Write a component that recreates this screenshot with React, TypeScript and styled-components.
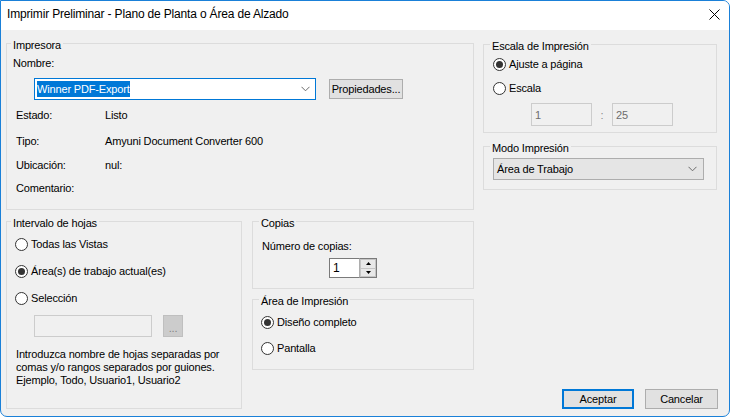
import React from 'react';
import styled, { createGlobalStyle } from 'styled-components';

const GlobalStyle = createGlobalStyle`
    html, body {
        margin: 0;
        padding: 0;
        background: #ffffff;
    }
    body {
        font-family: "Liberation Sans", Arial, sans-serif;
        font-size: 11px;
        letter-spacing: -0.16px;
        color: #000000;
    }
`;

const Window = styled.div`
    width: 730px;
    height: 417px;
    box-sizing: border-box;
    border: 1px solid #1a80d8;
    border-radius: 0 7px 7px 7px;
    background: #f0f0f0;
    display: flex;
    flex-direction: column;
    overflow: hidden;
`;

const TitleBar = styled.div`
    flex: none;
    height: 29px;
    background: #ffffff;
    display: flex;
    align-items: center;
    justify-content: space-between;
    padding-left: 6px;
`;

const Title = styled.span`
    font-size: 12px;
    letter-spacing: -0.17px;
    padding-bottom: 3px;
`;

const CloseButton = styled.div`
    width: 30px;
    height: 29px;
    display: flex;
    align-items: center;
    justify-content: center;
    padding-bottom: 3px;
    box-sizing: border-box;
`;

const Body = styled.div`
    flex: 1;
    display: flex;
    gap: 9px;
    padding: 13px 11px 7px 5px;
`;

const LeftColumn = styled.div`
    width: 468px;
    display: flex;
    flex-direction: column;
`;

const RightColumn = styled.div`
    width: 235px;
    display: flex;
    flex-direction: column;
    padding-top: 1px;
`;

const BottomRow = styled.div`
    display: flex;
    gap: 10px;
    margin-top: 11px;
`;

const Stack = styled.div`
    width: 222px;
    display: flex;
    flex-direction: column;
    gap: 10px;
`;

const Group = styled.div<{ $h: number; $w?: number; $pad?: string; $top?: number }>`
    position: relative;
    box-sizing: border-box;
    border: 1px solid #dcdcdc;
    height: ${(p) => p.$h}px;
    width: ${(p) => (p.$w ? `${p.$w}px` : 'auto')};
    padding: ${(p) => p.$pad || '0'};
    margin-top: ${(p) => p.$top || 0}px;
`;

const Caption = styled.span<{ $inset: number }>`
    position: absolute;
    top: -5px;
    left: ${(p) => p.$inset}px;
    padding: 0 2px;
    line-height: 13px;
    background: #f0f0f0;
`;

const Label = styled.div`
    line-height: 13px;
`;

const PrinterRow = styled.div`
    display: flex;
    align-items: center;
    gap: 13px;
    margin: 8px 0 0 21px;
`;

const Combo = styled.div`
    width: 282px;
    height: 22px;
    box-sizing: border-box;
    border: 1px solid #0078d7;
    background: #ffffff;
    display: flex;
    align-items: center;
    justify-content: space-between;
    padding: 0 5px 0 2px;
`;

const Selected = styled.span`
    background: #0078d7;
    color: #ffffff;
    line-height: 16px;
`;

const Button = styled.button<{ $w: number; $h?: number; $primary?: boolean }>`
    width: ${(p) => p.$w}px;
    height: ${(p) => p.$h || 20}px;
    box-sizing: border-box;
    font: inherit;
    letter-spacing: inherit;
    color: #000000;
    background: #e1e1e1;
    border: ${(p) => (p.$primary ? '2px solid #0078d7' : '1px solid #adadad')};
    padding: 0;
    display: flex;
    align-items: center;
    justify-content: center;
`;

const InfoGrid = styled.div`
    display: grid;
    grid-template-columns: 89px 1fr;
    grid-template-rows: 26px 26px 22px 24px;
    align-items: center;
    margin: 2px 0 0 3px;
`;

const RadioList = styled.div<{ $gap?: number }>`
    display: flex;
    flex-direction: column;
    gap: ${(p) => p.$gap || 0}px;
`;

const RadioRow = styled.label<{ $h: number }>`
    display: flex;
    align-items: center;
    gap: 3px;
    height: ${(p) => p.$h}px;
`;

const RadioCircle = styled.span<{ $checked?: boolean }>`
    width: 13px;
    height: 13px;
    box-sizing: border-box;
    border: 1px solid #333333;
    border-radius: 50%;
    background: #ffffff;
    display: inline-flex;
    align-items: center;
    justify-content: center;

    &::after {
        content: '';
        width: 7px;
        height: 7px;
        border-radius: 50%;
        background: #333333;
        display: ${(p) => (p.$checked ? 'block' : 'none')};
    }
`;

const ScaleRow = styled.div`
    display: flex;
    align-items: center;
    margin: 3px 0 0 38px;
`;

const DisabledBox = styled.div<{ $w: number; $h: number }>`
    width: ${(p) => p.$w}px;
    height: ${(p) => p.$h}px;
    box-sizing: border-box;
    border: 1px solid #cccccc;
    background: #f0f0f0;
    color: #6d6d6d;
    display: flex;
    align-items: center;
    padding-left: 3px;
`;

const Colon = styled.span`
    width: 20px;
    text-align: center;
    color: #8a8a8a;
`;

const Select = styled.div`
    width: 211px;
    height: 22px;
    box-sizing: border-box;
    border: 1px solid #adadad;
    background: #e5e5e5;
    display: flex;
    align-items: center;
    justify-content: space-between;
    padding: 0 6px 0 3px;
`;

const SheetsRow = styled.div`
    display: flex;
    gap: 11px;
    margin: 4px 0 0 19px;
`;

const EllipsisButton = styled.div`
    width: 20px;
    height: 22px;
    box-sizing: border-box;
    border: 1px solid #bfbfbf;
    background: #cccccc;
    color: #838383;
    display: flex;
    align-items: flex-end;
    justify-content: center;
    padding-bottom: 4px;
    line-height: 8px;
`;

const Help = styled.p`
    margin: 11px 0 0 1px;
    line-height: 13px;
`;

const Spin = styled.div`
    display: flex;
    margin: 5px 0 0 67px;
`;

const SpinInput = styled.div`
    width: 30px;
    height: 20px;
    box-sizing: border-box;
    border: 1px solid #7a7a7a;
    border-right: none;
    background: #ffffff;
    display: flex;
    align-items: center;
    padding-left: 3px;
    font-size: 12px;
`;

const SpinButtons = styled.div`
    width: 18px;
    height: 20px;
    box-sizing: border-box;
    border: 1px solid #7a7a7a;
    border-left: 1px solid #adadad;
    background: #e8e8e8;
    display: flex;
    flex-direction: column;
`;

const SpinHalf = styled.div<{ $top?: boolean }>`
    flex: 1;
    display: flex;
    align-items: center;
    justify-content: center;
    border: 1px solid #c5c5c5;
    border-top: ${(p) => (p.$top ? '1px solid #c5c5c5' : 'none')};
`;

const Actions = styled.div`
    margin-top: auto;
    display: flex;
    justify-content: flex-end;
    gap: 11px;
`;

const Chevron = () => (
    <svg width="9" height="6" viewBox="0 0 9 6">
        <polyline points="0.5,0.8 4.5,4.8 8.5,0.8" fill="none" stroke="#6b6b6b" strokeWidth="1" />
    </svg>
);

const Radio = ({ label, checked, h }: { label: string; checked?: boolean; h: number }) => (
    <RadioRow $h={h}>
        <RadioCircle $checked={checked} />
        <span>{label}</span>
    </RadioRow>
);

const App = () => {
    return (
        <>
            <GlobalStyle />
            <Window>
                <TitleBar>
                    <Title>Imprimir Preliminar - Plano de Planta o Área de Alzado</Title>
                    <CloseButton>
                        <svg width="11" height="11" viewBox="0 0 11 11">
                            <path d="M0.5 0.5 L10.5 10.5 M10.5 0.5 L0.5 10.5" stroke="#000" strokeWidth="1" />
                        </svg>
                    </CloseButton>
                </TitleBar>
                <Body>
                    <LeftColumn>
                        <Group $h={167} $pad="13px 0 0 6px">
                            <Caption $inset={4}>Impresora</Caption>
                            <Label>Nombre:</Label>
                            <PrinterRow>
                                <Combo>
                                    <Selected>Winner PDF-Export</Selected>
                                    <Chevron />
                                </Combo>
                                <Button $w={74}>Propiedades...</Button>
                            </PrinterRow>
                            <InfoGrid>
                                <span>Estado:</span>
                                <span>Listo</span>
                                <span>Tipo:</span>
                                <span>Amyuni Document Converter 600</span>
                                <span>Ubicación:</span>
                                <span>nul:</span>
                                <span>Comentario:</span>
                                <span />
                            </InfoGrid>
                        </Group>
                        <BottomRow>
                            <Group $h={188} $w={236} $pad="9px 0 0 8px">
                                <Caption $inset={4}>Intervalo de hojas</Caption>
                                <RadioList $gap={1}>
                                    <Radio h={26} label="Todas las Vistas" />
                                    <Radio h={26} label="Área(s) de trabajo actual(es)" checked />
                                    <Radio h={26} label="Selección" />
                                </RadioList>
                                <SheetsRow>
                                    <DisabledBox $w={118} $h={22} />
                                    <EllipsisButton>...</EllipsisButton>
                                </SheetsRow>
                                <Help>
                                    Introduzca nombre de hojas separadas por
                                    <br />
                                    comas y/o rangos separados por guiones.
                                    <br />
                                    Ejemplo, Todo, Usuario1, Usuario2
                                </Help>
                            </Group>
                            <Stack>
                                <Group $h={68} $pad="18px 0 0 9px">
                                    <Caption $inset={6}>Copias</Caption>
                                    <Label>Número de copias:</Label>
                                    <Spin>
                                        <SpinInput>1</SpinInput>
                                        <SpinButtons>
                                            <SpinHalf $top>
                                                <svg width="5" height="3" viewBox="0 0 5 3">
                                                    <polygon points="2.5,0 5,3 0,3" fill="#000" />
                                                </svg>
                                            </SpinHalf>
                                            <SpinHalf>
                                                <svg width="5" height="3" viewBox="0 0 5 3">
                                                    <polygon points="0,0 5,0 2.5,3" fill="#000" />
                                                </svg>
                                            </SpinHalf>
                                        </SpinButtons>
                                    </Spin>
                                </Group>
                                <Group $h={71} $pad="9px 0 0 8px">
                                    <Caption $inset={6}>Área de Impresión</Caption>
                                    <RadioList>
                                        <Radio h={26} label="Diseño completo" checked />
                                        <Radio h={26} label="Pantalla" />
                                    </RadioList>
                                </Group>
                            </Stack>
                        </BottomRow>
                    </LeftColumn>
                    <RightColumn>
                        <Group $h={89} $w={234} $pad="7px 0 0 9px">
                            <Caption $inset={6}>Escala de Impresión</Caption>
                            <RadioList>
                                <Radio h={24} label="Ajuste a página" checked />
                                <Radio h={24} label="Escala" />
                            </RadioList>
                            <ScaleRow>
                                <DisabledBox $w={61} $h={23}>1</DisabledBox>
                                <Colon>:</Colon>
                                <DisabledBox $w={61} $h={23}>25</DisabledBox>
                            </ScaleRow>
                        </Group>
                        <Group $h={44} $w={234} $pad="11px 0 0 9px" $top={13}>
                            <Caption $inset={6}>Modo Impresión</Caption>
                            <Select>
                                <span>Área de Trabajo</span>
                                <Chevron />
                            </Select>
                        </Group>
                        <Actions>
                            <Button $w={72} $primary>
                                Aceptar
                            </Button>
                            <Button $w={73}>Cancelar</Button>
                        </Actions>
                    </RightColumn>
                </Body>
            </Window>
        </>
    );
};

export default App;
